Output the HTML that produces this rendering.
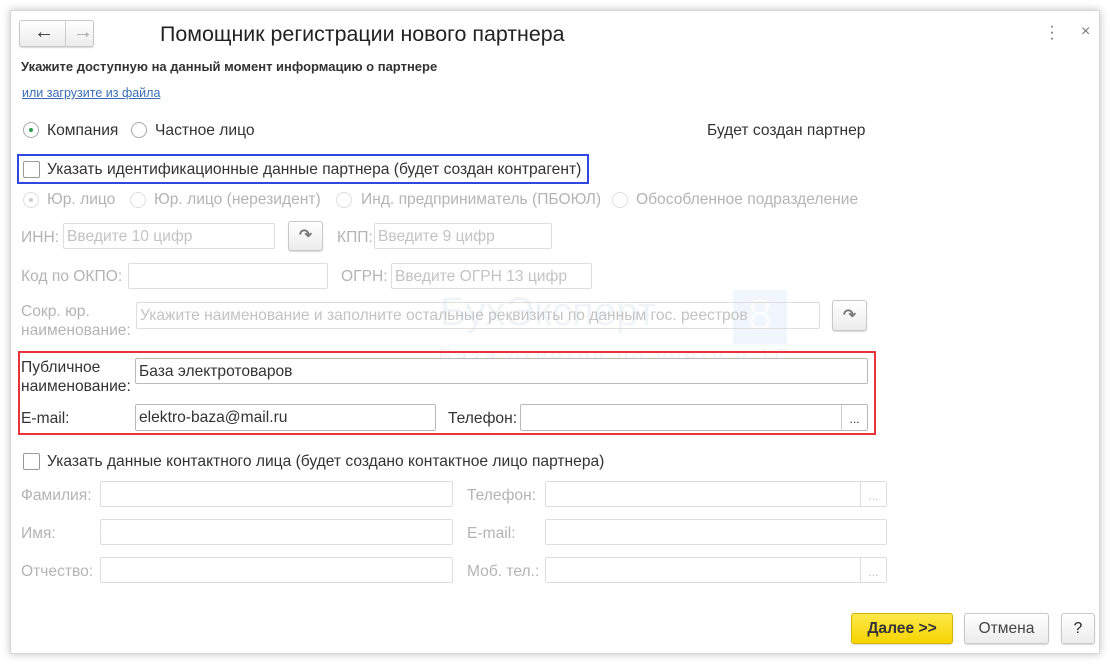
<!DOCTYPE html>
<html><head><meta charset="utf-8"><style>
*{box-sizing:border-box;margin:0;padding:0}
body{width:1110px;height:664px;background:#fff;font-family:"Liberation Sans",Arial,sans-serif;position:relative;overflow:hidden;color:#333}
.win{position:absolute;left:10px;top:10px;width:1090px;height:644px;background:#fff;border:1px solid #d8d8d8;box-shadow:0 0 8px rgba(0,0,0,.25)}
.a{position:absolute;white-space:nowrap}
.t{font-size:15.6px;line-height:18px}
.g{color:#b4b4b4}
.in{position:absolute;border:1px solid #b9b9b9;border-radius:2px;background:#fff;font-size:15.6px;line-height:26px;padding-left:3px;color:#333}
.in.d{border-color:#ddd;color:#c3c3c3}
.btn{position:absolute;border:1px solid #c8c8c8;border-radius:3px;background:linear-gradient(#fff,#ececec);box-shadow:0 1px 1px rgba(0,0,0,.15);text-align:center;font-size:15.6px}
.rad{position:absolute;width:16px;height:16px;border:1px solid #a8a8a8;border-radius:50%;background:#fff}
.rad.d{border-color:#ddd}
.dot{position:absolute;left:5px;top:5px;width:4px;height:4px;border-radius:50%;background:#2a9d4a}
.cb{position:absolute;width:17px;height:17px;border:1px solid #999;border-radius:2px;background:#fff}
.dots{position:absolute;top:0;bottom:0;right:0;width:26px;border-left:1px solid #ccc;font-size:12px;text-align:center;line-height:28px}
</style></head><body>
<div class="win"></div>

<div class="btn" style="left:19px;top:20px;width:75px;height:27px"></div>
<div class="a" style="left:65px;top:20px;width:1px;height:27px;background:#ccc"></div>
<div class="a" style="left:34px;top:21px;font-size:20px;color:#333;font-weight:bold">&#8592;</div>
<div class="a" style="left:73px;top:21px;font-size:20px;color:#aaa;font-weight:bold">&#8594;</div>
<div class="a" style="left:160px;top:22px;font-size:21.4px;color:#222">Помощник регистрации нового партнера</div>
<div class="a" style="left:1049px;top:24px;font-size:16px;color:#666;line-height:6px;width:6px;text-align:center">·<br>·<br>·</div>
<div class="a" style="left:1081px;top:23px;font-size:16px;color:#777">×</div>

<div class="a" style="left:21px;top:59px;font-size:13px;font-weight:bold;color:#333">Укажите доступную на данный момент информацию о партнере</div>
<div class="a" style="left:22px;top:86px;font-size:12.5px;color:#3b6eb5;text-decoration:underline">или загрузите из файла</div>

<div class="rad" style="left:23px;top:122px"><div class="dot"></div></div>
<div class="a t" style="left:47px;top:122px">Компания</div>
<div class="rad" style="left:131px;top:122px"></div>
<div class="a t" style="left:155px;top:122px">Частное лицо</div>
<div class="a t" style="left:707px;top:122px">Будет создан партнер</div>

<div class="a" style="left:17px;top:154px;width:572px;height:30px;border:2px solid #3148e0"></div>
<div class="cb" style="left:23px;top:161px"></div>
<div class="a t" style="left:47px;top:161px">Указать идентификационные данные партнера (будет создан контрагент)</div>

<div class="rad d" style="left:23px;top:192px"><div class="dot" style="background:#ccc"></div></div>
<div class="a t g" style="left:47px;top:191px">Юр. лицо</div>
<div class="rad d" style="left:130px;top:192px"></div>
<div class="a t g" style="left:154px;top:191px">Юр. лицо (нерезидент)</div>
<div class="rad d" style="left:336px;top:192px"></div>
<div class="a t g" style="left:361px;top:191px">Инд. предприниматель (ПБОЮЛ)</div>
<div class="rad d" style="left:612px;top:192px"></div>
<div class="a t g" style="left:636px;top:191px">Обособленное подразделение</div>

<div class="a t g" style="left:21px;top:229px">ИНН:</div>
<div class="in d" style="left:63px;top:223px;width:212px;height:26px">Введите 10 цифр</div>
<div class="btn" style="left:288px;top:221px;width:35px;height:30px;color:#777;line-height:28px;font-weight:bold">&#8631;</div>
<div class="a t g" style="left:337px;top:229px">КПП:</div>
<div class="in d" style="left:374px;top:223px;width:178px;height:26px">Введите 9 цифр</div>

<div class="a t g" style="left:21px;top:268px">Код по ОКПО:</div>
<div class="in d" style="left:128px;top:263px;width:200px;height:26px"></div>
<div class="a t g" style="left:341px;top:268px">ОГРН:</div>
<div class="in d" style="left:391px;top:263px;width:201px;height:26px">Введите ОГРН 13 цифр</div>

<div class="a" style="left:440px;top:290px;font-size:40px;color:rgba(190,205,220,.22)">БухЭксперт</div>
<div class="a" style="left:733px;top:290px;width:54px;height:54px;background:rgba(180,210,235,.2);color:rgba(255,255,255,.7);font-size:44px;text-align:center">8</div>
<div class="a" style="left:438px;top:344px;font-size:22px;color:rgba(190,200,215,.22);letter-spacing:3px">База ответов по учету в 1С</div>

<div class="a t g" style="left:21px;top:302px;line-height:19px">Сокр. юр.<br>наименование:</div>
<div class="in d" style="left:136px;top:302px;width:684px;height:27px;background:transparent">Укажите наименование и заполните остальные реквизиты по данным гос. реестров</div>
<div class="btn" style="left:832px;top:300px;width:35px;height:31px;color:#777;line-height:29px;font-weight:bold">&#8631;</div>

<div class="a" style="left:18px;top:351px;width:858px;height:84px;border:2px solid #e8333a"></div>
<div class="a t" style="left:21px;top:358px;line-height:19px;color:#333">Публичное<br>наименование:</div>
<div class="in" style="left:135px;top:358px;width:733px;height:26px">База электротоваров</div>
<div class="a t" style="left:21px;top:410px">E-mail:</div>
<div class="in" style="left:135px;top:404px;width:301px;height:27px">elektro-baza@mail.ru</div>
<div class="a t" style="left:448px;top:410px">Телефон:</div>
<div class="in" style="left:520px;top:404px;width:348px;height:27px"><div class="dots">...</div></div>

<div class="cb" style="left:23px;top:453px"></div>
<div class="a t" style="left:47px;top:453px">Указать данные контактного лица (будет создано контактное лицо партнера)</div>

<div class="a t g" style="left:21px;top:487px">Фамилия:</div>
<div class="in d" style="left:100px;top:481px;width:353px;height:26px"></div>
<div class="a t g" style="left:467px;top:487px">Телефон:</div>
<div class="in d" style="left:545px;top:481px;width:342px;height:26px"><div class="dots" style="border-color:#ddd">...</div></div>

<div class="a t g" style="left:21px;top:525px">Имя:</div>
<div class="in d" style="left:100px;top:519px;width:353px;height:26px"></div>
<div class="a t g" style="left:467px;top:525px">E-mail:</div>
<div class="in d" style="left:545px;top:519px;width:342px;height:26px"></div>

<div class="a t g" style="left:21px;top:563px">Отчество:</div>
<div class="in d" style="left:100px;top:557px;width:353px;height:26px"></div>
<div class="a t g" style="left:467px;top:563px">Моб. тел.:</div>
<div class="in d" style="left:545px;top:557px;width:342px;height:26px"><div class="dots" style="border-color:#ddd">...</div></div>

<div class="btn" style="left:851px;top:613px;width:102px;height:31px;background:linear-gradient(#ffe84a,#f5d400);border-color:#d4b400;font-weight:bold;line-height:30px;color:#333">Далее &gt;&gt;</div>
<div class="btn" style="left:964px;top:613px;width:85px;height:31px;line-height:30px;color:#444">Отмена</div>
<div class="btn" style="left:1061px;top:613px;width:34px;height:31px;line-height:30px;color:#222">?</div>
</body></html>
